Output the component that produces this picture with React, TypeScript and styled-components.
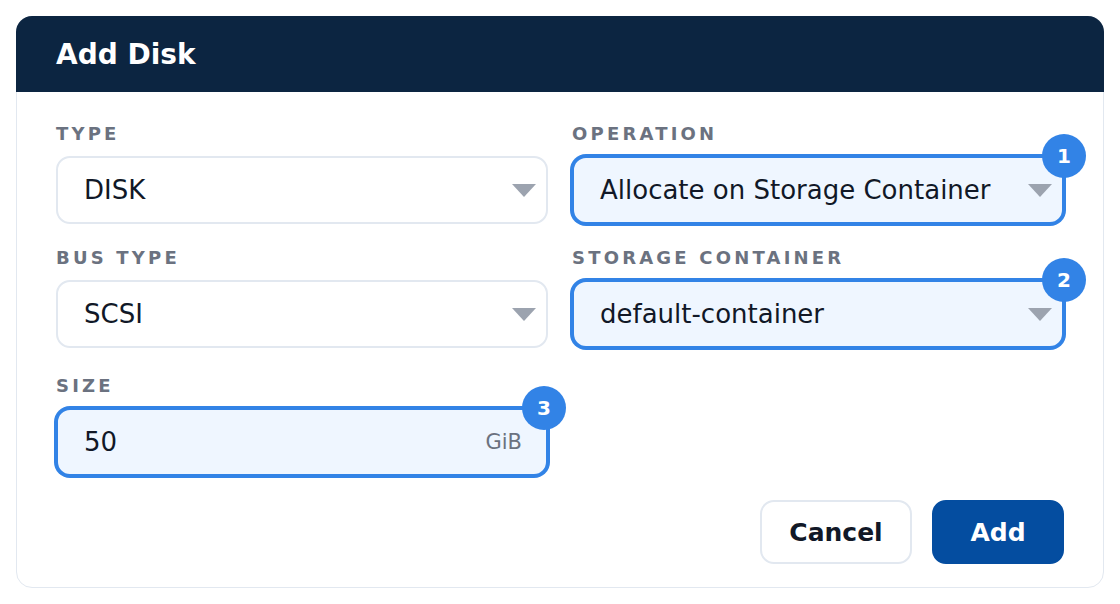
import React from "react";
import styled, { createGlobalStyle } from "styled-components";

const GlobalStyle = createGlobalStyle`
  html, body {
    margin: 0;
    background: #ffffff;
  }
  body {
    font-family: "DejaVu Sans", "Liberation Sans", sans-serif;
  }
  * {
    box-sizing: border-box;
  }
`;

const BLUE = "#3283e6";

const Page = styled.div`
  padding: 16px;
`;

const Card = styled.section`
  width: 1088px;
  border: 1px solid #e2e8f0;
  border-radius: 16px;
  background: #ffffff;
`;

const Header = styled.header`
  margin: -1px -1px 0;
  height: 76px;
  padding: 0 40px;
  display: flex;
  align-items: center;
  background: #0c2541;
  border-radius: 16px 16px 0 0;
`;

const Title = styled.h2`
  margin: 0;
  font-size: 28px;
  font-weight: 700;
  color: #ffffff;
`;

const Body = styled.div`
  padding: 32px 39px 23px;
`;

const Grid = styled.div<{ $top?: number }>`
  display: grid;
  grid-template-columns: 1fr 1fr;
  gap: 24px;
  margin-top: ${(p) => p.$top ?? 0}px;
`;

const Group = styled.div`
  display: flex;
  flex-direction: column;
  gap: 12px;
`;

const Label = styled.label`
  font-size: 18px;
  line-height: 20px;
  font-weight: 700;
  letter-spacing: 3.2px;
  text-transform: uppercase;
  color: #6b7280;
`;

const Field = styled.div<{ $active?: boolean; $padRight: number }>`
  position: relative;
  height: 68px;
  display: flex;
  align-items: center;
  gap: 12px;
  padding: 0 ${(p) => p.$padRight}px 0 26px;
  border: 2px solid ${(p) => (p.$active ? BLUE : "#e2e8f0")};
  box-shadow: ${(p) => (p.$active ? `0 0 0 2px ${BLUE}` : "none")};
  background: ${(p) => (p.$active ? "#eff6ff" : "#ffffff")};
  border-radius: 14px;
`;

const Value = styled.span`
  flex: 1;
  font-size: 26px;
  color: #111827;
  white-space: nowrap;
`;

const Unit = styled.span`
  font-size: 21px;
  color: #6b7280;
`;

const Badge = styled.span<{ $right: number }>`
  position: absolute;
  top: -24px;
  right: ${(p) => p.$right}px;
  width: 44px;
  height: 44px;
  border-radius: 50%;
  background: ${BLUE};
  color: #ffffff;
  font-size: 20px;
  font-weight: 700;
  display: flex;
  align-items: center;
  justify-content: center;
`;

const Actions = styled.div`
  display: flex;
  justify-content: flex-end;
  gap: 20px;
  margin-top: 24px;
`;

const Button = styled.button<{ $primary?: boolean }>`
  height: 64px;
  min-width: ${(p) => (p.$primary ? 132 : 152)}px;
  padding: 0 26px;
  border-radius: 14px;
  border: 2px solid ${(p) => (p.$primary ? "#044da0" : "#e2e8f0")};
  background: ${(p) => (p.$primary ? "#044da0" : "#ffffff")};
  color: ${(p) => (p.$primary ? "#ffffff" : "#111827")};
  font-family: "DejaVu Sans", sans-serif;
  font-size: 25px;
  font-weight: 700;
  cursor: pointer;
`;

const Caret = () => (
  <svg width="24" height="13" viewBox="0 0 24 13">
    <polygon points="0,0 24,0 12,13" fill="#9ca3af" />
  </svg>
);

type SelectProps = {
  label: string;
  value: string;
  step?: number;
};

const Select = ({ label, value, step }: SelectProps) => (
  <Group>
    <Label>{label}</Label>
    <Field $active={step !== undefined} $padRight={10}>
      <Value>{value}</Value>
      <Caret />
      {step !== undefined && <Badge $right={-24}>{step}</Badge>}
    </Field>
  </Group>
);

export default function App() {
  return (
    <Page>
      <GlobalStyle />
      <Card>
        <Header>
          <Title>Add Disk</Title>
        </Header>
        <Body>
          <Grid>
            <Select label="Type" value="DISK" />
            <Select label="Operation" value="Allocate on Storage Container" step={1} />
            <Select label="Bus Type" value="SCSI" />
            <Select label="Storage Container" value="default-container" step={2} />
          </Grid>
          <Grid $top={28}>
            <Group>
              <Label>Size</Label>
              <Field $active $padRight={24}>
                <Value>50</Value>
                <Unit>GiB</Unit>
                <Badge $right={-20}>3</Badge>
              </Field>
            </Group>
          </Grid>
          <Actions>
            <Button>Cancel</Button>
            <Button $primary>Add</Button>
          </Actions>
        </Body>
      </Card>
    </Page>
  );
}
